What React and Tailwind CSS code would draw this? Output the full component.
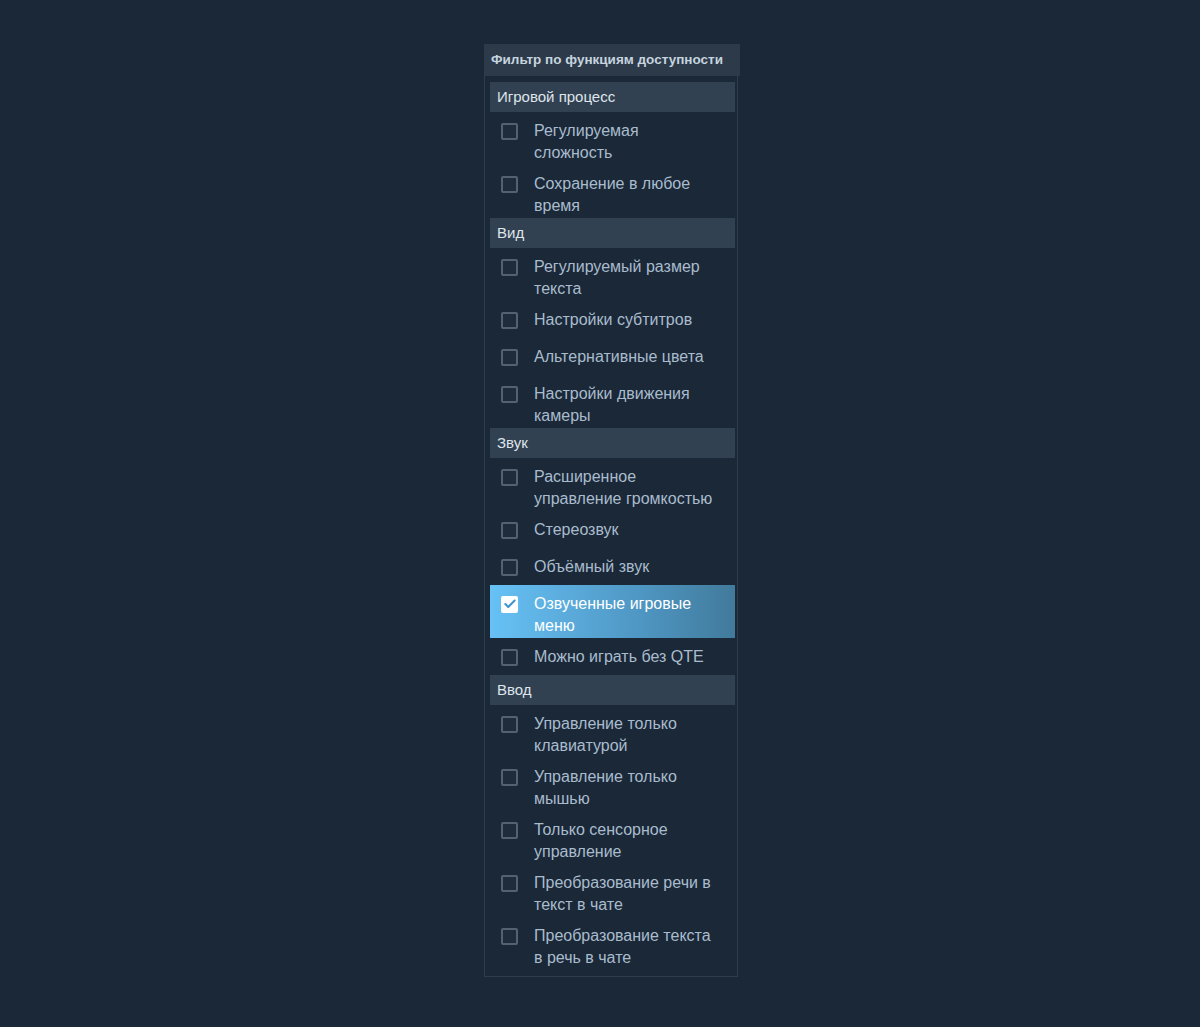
import { Check } from 'lucide-react';

const sections = [
  {
    title: 'Игровой процесс',
    items: ['Регулируемая сложность', 'Сохранение в любое время']
  },
  {
    title: 'Вид',
    items: ['Регулируемый размер текста', 'Настройки субтитров', 'Альтернативные цвета', 'Настройки движения камеры']
  },
  {
    title: 'Звук',
    items: ['Расширенное управление громкостью', 'Стереозвук', 'Объёмный звук', 'Озвученные игровые меню', 'Можно играть без QTE']
  },
  {
    title: 'Ввод',
    items: [
      'Управление только клавиатурой',
      'Управление только мышью',
      'Только сенсорное управление',
      'Преобразование речи в текст в чате',
      'Преобразование текста в речь в чате'
    ]
  }
];

const checked = ['Озвученные игровые меню'];

const FilterRow = ({ label, active }) => (
  <div
    className={`flex min-h-[37px] items-start pt-[8px] pb-[1px] ${
      active ? 'bg-[linear-gradient(90deg,#67c1f5_0%,#4f97c4_60%,#417a9b_100%)]' : ''
    }`}
  >
    <div className="flex h-[22px] w-[44px] shrink-0 items-center pl-[11px]">
      {active ? (
        <span className="flex h-[17px] w-[17px] items-center justify-center rounded-[2px] bg-white">
          <Check className="h-[14px] w-[14px] text-[#3d94d0]" strokeWidth={3.5} />
        </span>
      ) : (
        <span className="h-[17px] w-[17px] rounded-[2px] border-2 border-[#54616f] bg-[#1f2c3b]" />
      )}
    </div>
    <span className={`pr-[17px] text-[16px] leading-[22px] ${active ? 'text-white' : 'text-[#a9bccd]'}`}>{label}</span>
  </div>
);

export default function App() {
  return (
    <div className="min-h-[1027px] bg-[#1b2838] pt-[44px] pl-[484px] font-['Liberation_Sans',Arial,sans-serif]">
      <div className="w-[256px]">
        <div className="flex h-[32px] items-center bg-[#2c3a4a] pl-[7px] text-[13.5px] font-bold text-[#c6d4df]">
          Фильтр по функциям доступности
        </div>
        <div className="mr-[2px] border-x border-b border-[#2f3e4f] pt-[6px] pb-[6px] pl-[5px] pr-[2px]">
          {sections.map((section) => (
            <div key={section.title}>
              <div className="flex h-[30px] items-center bg-[#314152] pl-[7px] text-[15px] text-[#dfe5ea]">
                {section.title}
              </div>
              {section.items.map((item) => (
                <FilterRow key={item} label={item} active={checked.includes(item)} />
              ))}
            </div>
          ))}
        </div>
      </div>
    </div>
  );
}
